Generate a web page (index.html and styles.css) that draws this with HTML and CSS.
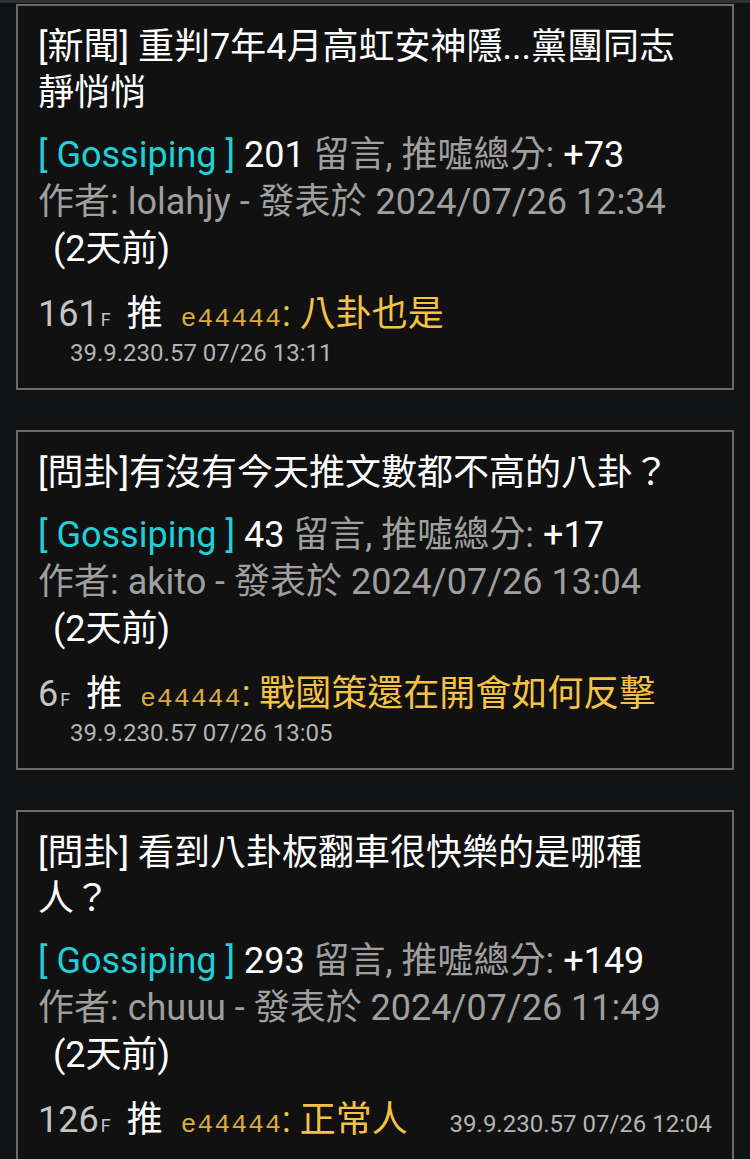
FILE: index.html
```html
<!DOCTYPE html>
<html lang="zh-Hant">
<head>
<meta charset="utf-8">
<title>Gossiping</title>
<link rel="stylesheet" href="styles.css">
</head>
<body>
<div class="topbar"></div>
<main class="list">
  <article class="card">
    <h2 class="title">[新聞] 重判7年4月高虹安神隱...黨團同志靜悄悄</h2>
    <div class="meta">
      <div class="line"><span class="board">[ Gossiping ]</span> <span class="num">201</span> 留言, 推噓總分: <span class="num">+73</span></div>
      <div class="line">作者: lolahjy - 發表於 2024/07/26 12:34</div>
      <div class="line ago">(2天前)</div>
    </div>
    <div class="comment">
      <span class="cmain"><span class="floor">161<small>F</small></span><span class="tag">推</span><span class="user">e44444</span><span class="colon">:</span><span class="ctext">八卦也是</span></span>
      <span class="ip">39.9.230.57 07/26 13:11</span>
    </div>
  </article>

  <article class="card">
    <h2 class="title">[問卦]有沒有今天推文數都不高的八卦？</h2>
    <div class="meta">
      <div class="line"><span class="board">[ Gossiping ]</span> <span class="num">43</span> 留言, 推噓總分: <span class="num">+17</span></div>
      <div class="line">作者: akito - 發表於 2024/07/26 13:04</div>
      <div class="line ago">(2天前)</div>
    </div>
    <div class="comment">
      <span class="cmain"><span class="floor">6<small>F</small></span><span class="tag">推</span><span class="user">e44444</span><span class="colon">:</span><span class="ctext">戰國策還在開會如何反擊</span></span>
      <span class="ip">39.9.230.57 07/26 13:05</span>
    </div>
  </article>

  <article class="card">
    <h2 class="title">[問卦] 看到八卦板翻車很快樂的是哪種人？</h2>
    <div class="meta">
      <div class="line"><span class="board">[ Gossiping ]</span> <span class="num">293</span> 留言, 推噓總分: <span class="num">+149</span></div>
      <div class="line">作者: chuuu - 發表於 2024/07/26 11:49</div>
      <div class="line ago">(2天前)</div>
    </div>
    <div class="comment">
      <span class="cmain"><span class="floor">126<small>F</small></span><span class="tag">推</span><span class="user">e44444</span><span class="colon">:</span><span class="ctext">正常人</span></span>
      <span class="ip">39.9.230.57 07/26 12:04</span>
    </div>
  </article>
</main>
</body>
</html>
```

FILE: styles.css
```css
* {
  box-sizing: border-box;
}

html, body {
  margin: 0;
  padding: 0;
  background: #111214;
}

body {
  font-family: Roboto, "Noto Sans CJK TC", "Noto Sans", sans-serif;
  color: #ffffff;
  overflow: hidden;
}

.topbar {
  height: 3px;
  background: #2f3032;
  margin-bottom: 1px;
}

.list {
  display: flex;
  flex-direction: column;
  gap: 40px;
  padding: 0 16px;
}

.card {
  border: 2px solid #6a6a6a;
  background: #111111;
  padding: 18px 20px 19px 20px;
}

.title {
  margin: 0 14px 0 0;
  font-size: 36px;
  line-height: 46px;
  font-weight: 400;
  color: #ffffff;
}

.meta {
  margin-top: 16px;
  font-size: 36px;
  line-height: 47px;
  color: #9f9f9f;
}

.line {
  white-space: nowrap;
}

.ago {
  padding-left: 15px;
  color: #ffffff;
}

.board {
  color: #1fd0d8;
}

.num {
  color: #ffffff;
}

.comment {
  margin-top: 18px;
  display: flex;
  flex-wrap: wrap;
  justify-content: space-between;
  align-items: baseline;
}

.cmain {
  display: block;
  height: 46px;
  font-size: 36px;
  line-height: 46px;
  white-space: nowrap;
}

.cmain > span,
.cmain small {
  line-height: 1;
}

.floor {
  color: #c4c4c4;
}

.floor small {
  font-size: 18px;
  margin-left: 2px;
}

.tag {
  color: #ffffff;
  margin-left: 16px;
}

.user {
  margin-left: 18px;
  font-family: "Liberation Mono", "DejaVu Sans Mono", monospace;
  font-size: 26px;
  letter-spacing: 1.3px;
  color: #dcab3c;
}

.colon {
  color: #f2c046;
}

.ctext {
  margin-left: 9px;
  color: #f5c244;
}

.ip {
  display: block;
  height: 32px;
  margin-left: 32px;
  font-size: 24px;
  line-height: 32px;
  color: #b4b4b4;
  white-space: nowrap;
}
```
